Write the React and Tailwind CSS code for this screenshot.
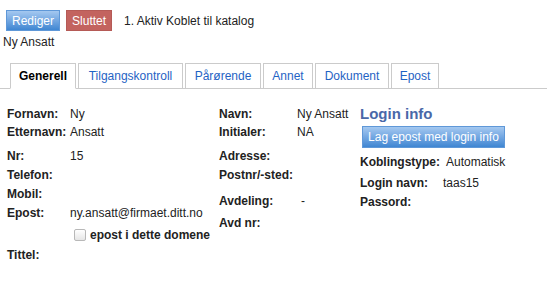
import React from 'react'

const tabs = [
  { name: 'Generell', w: 'w-[66px]' },
  { name: 'Tilgangskontroll', w: 'w-[105px]' },
  { name: 'Pårørende', w: 'w-[76px]' },
  { name: 'Annet', w: 'w-[50px]' },
  { name: 'Dokument', w: 'w-[74px]' },
  { name: 'Epost', w: 'w-[48px]' },
]

function Row({ label, value, labelW, className = '' }) {
  return (
    <div className={`flex items-center h-[18px] ${className}`}>
      <span className="font-bold shrink-0" style={{ width: labelW }}>{label}</span>
      <span>{value}</span>
    </div>
  )
}

export default function App() {
  return (
    <div className="w-[547px] h-[282px] bg-white text-[12px] text-[#222] font-['Liberation_Sans',Arial,sans-serif] overflow-hidden">
      <div className="flex items-center pt-[10px] pl-[6px]">
        <button className="h-[21px] px-[5px] text-white text-[12px] border border-[#5f98d8] bg-gradient-to-b from-[#a4c8f0] to-[#3f86d2]">
          Rediger
        </button>
        <button className="ml-[6px] h-[21px] px-[5px] text-white text-[12px] border border-[#b55a56] bg-[#c3635f]">
          Sluttet
        </button>
        <span className="ml-[12px]">1. Aktiv Koblet til katalog</span>
      </div>
      <div className="pl-[3px] mt-[4px] leading-[14px]">Ny Ansatt</div>

      <div className="mt-[14px] flex items-end border-b border-[#cbcbcb] pl-[10px] gap-[2px] h-[26px]">
        {tabs.map((t, i) => (
          <div
            key={t.name}
            className={`${t.w} flex items-center justify-center border border-[#cbcbcb] ${
              i === 0 ? 'h-[26px] -mb-px pb-px font-bold text-black border-b-white' : 'h-[25px] text-[#1f63c4] border-b-0'
            }`}
          >
            {t.name}
          </div>
        ))}
      </div>

      <div className="flex pt-[16px]">
        <div className="w-[219px] pl-[7px]">
          <Row label="Fornavn:" value="Ny" labelW={63} />
          <Row label="Etternavn:" value="Ansatt" labelW={63} />
          <Row label="Nr:" value="15" labelW={63} className="mt-[6px]" />
          <Row label="Telefon:" value="" labelW={63} className="mt-px" />
          <Row label="Mobil:" value="" labelW={63} className="mt-px" />
          <Row label="Epost:" value="ny.ansatt@firmaet.ditt.no" labelW={63} className="mt-px" />
          <div className="flex items-center h-[18px] mt-[4px] pl-[67px]">
            <span className="w-[12px] h-[12px] rounded-[2px] border border-[#b8b8b8] bg-gradient-to-b from-white to-[#e6e6e6] mr-[4px]" />
            <span className="font-bold">epost i dette domene</span>
          </div>
          <Row label="Tittel:" value="" labelW={63} className="mt-[2px]" />
        </div>

        <div className="w-[140px]">
          <Row label="Navn:" value="Ny Ansatt" labelW={78} />
          <Row label="Initialer:" value="NA" labelW={78} />
          <Row label="Adresse:" value="" labelW={78} className="mt-[6px]" />
          <Row label="Postnr/-sted:" value="" labelW={78} className="mt-px" />
          <Row label="Avdeling:" value="-" labelW={82} className="mt-[8px]" />
          <Row label="Avd nr:" value="" labelW={78} className="mt-[4px]" />
        </div>

        <div className="pl-[1px]">
          <div className="text-[15px] font-bold text-[#4a68a8] leading-[18px]">Login info</div>
          <button className="mt-[3px] ml-[2px] h-[22px] w-[143px] text-white text-[12px] border border-[#5f98d8] bg-gradient-to-b from-[#a4c8f0] to-[#3f86d2]">
            Lag epost med login info
          </button>
          <Row label="Koblingstype:" value="Automatisk" labelW={86} className="mt-[5px]" />
          <Row label="Login navn:" value="taas15" labelW={83} className="mt-[3px]" />
          <Row label="Passord:" value="" labelW={83} className="mt-px" />
        </div>
      </div>
    </div>
  )
}
